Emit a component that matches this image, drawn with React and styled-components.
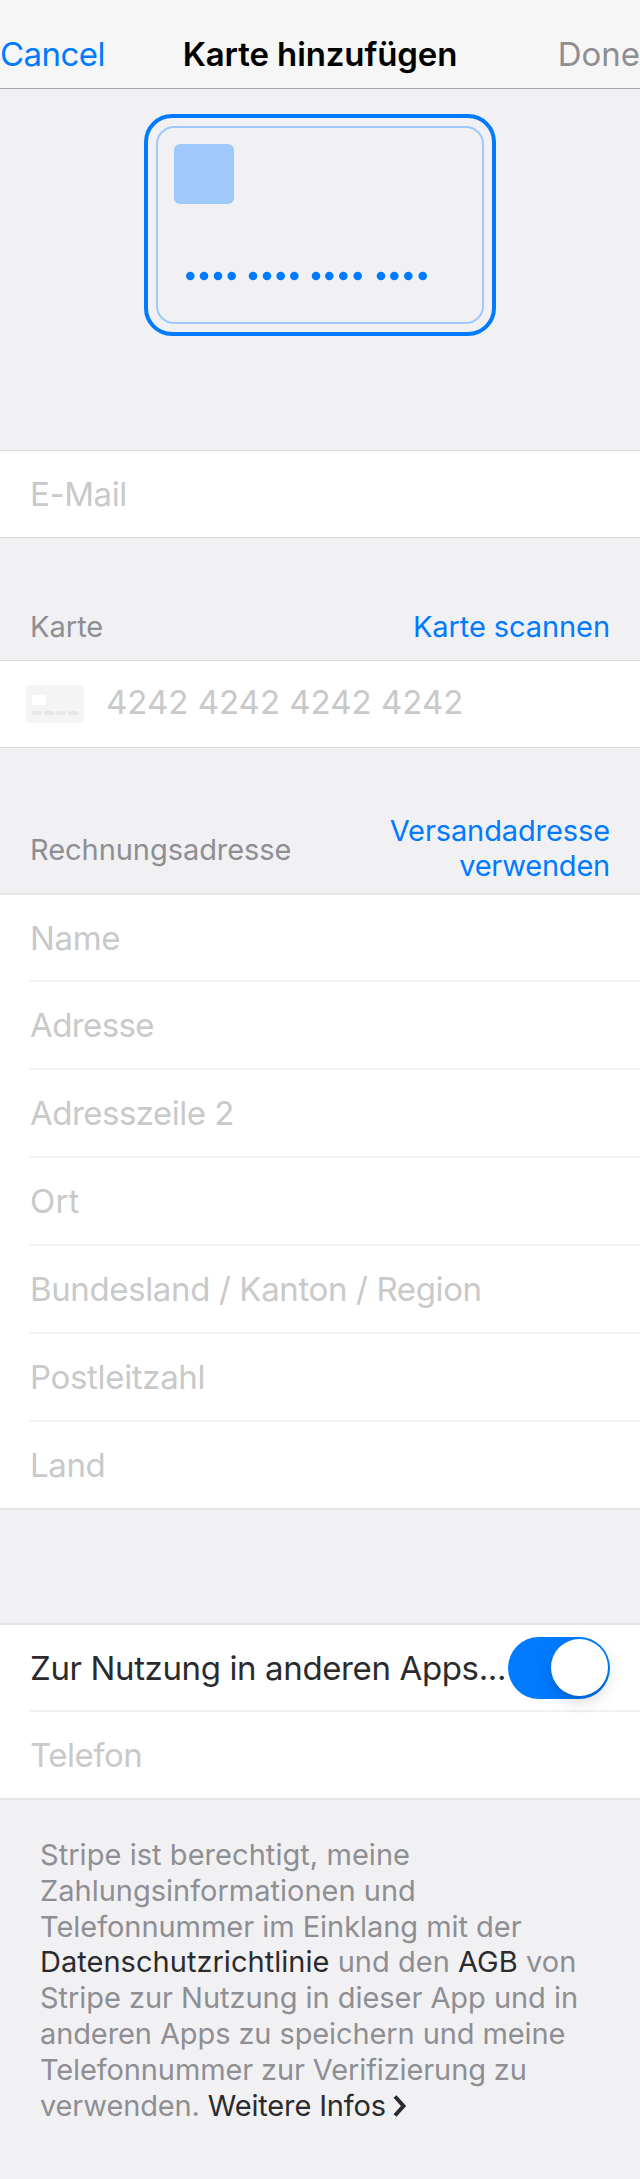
import React from "react";
import styled, { createGlobalStyle } from "styled-components";

const GlobalStyle = createGlobalStyle`
  *, *::before, *::after { box-sizing: border-box; }
  body {
    margin: 0;
    background: #f1f1f4;
    font-family: Inter, "Liberation Sans", sans-serif;
    font-feature-settings: "calt" 0;
  }
`;

const Screen = styled.main`
  width: 640px;
  height: 2179px;
  display: flex;
  flex-direction: column;
  background: #f1f1f4;
  overflow: hidden;
`;

const NavBar = styled.header`
  height: 89px;
  flex: none;
  display: grid;
  grid-template-columns: 120px 1fr 120px;
  padding-top: 34px;
  background: #f6f6f6;
  border-bottom: 1px solid #a7a7aa;
`;

const Label = styled.span`
  white-space: nowrap;
  letter-spacing: ${(p) => p.$track || 0}px;
`;

const NavButton = styled.button`
  border: 0;
  padding: 0;
  height: 40px;
  background: none;
  font: 400 33px/40px Inter, "Liberation Sans", sans-serif;
  text-align: ${(p) => (p.$end ? "right" : "left")};
  color: ${(p) => (p.$muted ? "#8e8e93" : "#007aff")};
`;

const Title = styled.h1`
  margin: 0;
  font-size: 33px;
  line-height: 40px;
  font-weight: 600;
  text-align: center;
  color: #000;
`;

const Preview = styled.div`
  height: 361px;
  flex: none;
  padding-top: 25px;
  display: flex;
  justify-content: center;
  align-items: flex-start;
`;

const Group = styled.section`
  flex: none;
  background: #fff;
  border-style: solid;
  border-color: ${(p) => (p.$soft ? "#e5e5e8" : "#d9d9dc")};
  border-width: ${(p) => (p.$soft ? 2 : 1)}px 0;
`;

const Row = styled.div`
  height: ${(p) => p.$h || 88}px;
  display: flex;
  align-items: center;
  padding: ${(p) => (p.$divided ? 2 : 0)}px 30px 0;
  background: ${(p) =>
    p.$divided
      ? "linear-gradient(#f0f0f0, #f0f0f0) 30px 0 / 610px 2px no-repeat"
      : "none"};
`;

const Placeholder = styled.span`
  font-size: 33px;
  line-height: 40px;
  white-space: nowrap;
  color: #c9c9c9;
  letter-spacing: ${(p) => p.$track || 0}px;
`;

const CardNumber = styled(Placeholder)`
  margin: -4px 0 0 22px;
`;

const SwitchText = styled(Placeholder)`
  color: #2b2b2d;
  flex: 1;
  min-width: 0;
`;

const CardGlyph = styled.svg`
  flex: none;
  display: block;
  margin-left: -4px;
`;

const SectionHeader = styled.div`
  height: ${(p) => p.$h}px;
  flex: none;
  display: flex;
  justify-content: space-between;
  align-items: flex-end;
  padding: 0 30px ${(p) => p.$pb}px;
  font-size: 29px;
  line-height: 35px;
  color: #8e8e93;
`;

const HeaderTitle = styled(Label)`
  margin-bottom: ${(p) => p.$lift || 0}px;
`;

const HeaderAction = styled.a`
  display: flex;
  flex-direction: column;
  align-items: flex-end;
  color: #007aff;
`;

const Spacer = styled.div`
  height: ${(p) => p.$h}px;
  flex: none;
`;

const Switch = styled.div`
  flex: none;
  width: 102px;
  height: 62px;
  border-radius: 31px;
  background: #007aff;
  display: flex;
  justify-content: flex-end;
  align-items: center;
  padding-right: 2.5px;
`;

const Knob = styled.div`
  width: 57px;
  height: 57px;
  border-radius: 50%;
  background: #fff;
  box-shadow: 0 6px 16px rgba(0, 0, 0, 0.15), 0 3px 2px rgba(0, 0, 0, 0.08);
`;

const Legal = styled.p`
  margin: 0;
  padding: 37px 40px 0;
  font-size: 29px;
  line-height: 35.8px;
  color: #8e8e93;
`;

const LegalLine = styled.span`
  display: block;
  white-space: nowrap;
  letter-spacing: ${(p) => p.$track || 0}px;
`;

const Link = styled.a`
  color: #2b2b2d;
`;

const Chevron = styled.svg`
  margin-left: 7px;
  vertical-align: -1px;
`;

const DOTS = [190.3, 204, 218, 231.7, 253, 267, 280.7, 294.3, 316, 329.3, 343.3, 357.7, 381, 394.3, 408.3, 422.7];

const ADDRESS = [
  ["Name", -0.35],
  ["Adresse", -0.6],
  ["Adresszeile 2", -0.52],
  ["Ort", 0.2],
  ["Bundesland / Kanton / Region", -0.37],
  ["Postleitzahl", -0.33],
  ["Land", -0.4],
];

function CardPreview() {
  return (
    <svg width="352" height="222" viewBox="144 114 352 222" fill="none">
      <rect x="146" y="116" width="348" height="218" rx="26" stroke="#007aff" strokeWidth="4" />
      <rect x="157" y="127" width="326" height="196" rx="17" stroke="#9fc9fa" strokeWidth="2" />
      <rect x="174" y="144" width="60" height="60" rx="6" fill="#9fc9fa" />
      {DOTS.map((x) => (
        <circle key={x} cx={x} cy="276" r="4.3" fill="#007aff" />
      ))}
    </svg>
  );
}

export default function App() {
  return (
    <Screen>
      <GlobalStyle />
      <NavBar>
        <NavButton><Label $track={-0.55}>Cancel</Label></NavButton>
        <Title><Label $track={-0.1}>Karte hinzufügen</Label></Title>
        <NavButton $end $muted><Label>Done</Label></NavButton>
      </NavBar>
      <Preview><CardPreview /></Preview>
      <Group>
        <Row $h={86}><Placeholder $track={-0.4}>E-Mail</Placeholder></Row>
      </Group>
      <SectionHeader $h={122} $pb={16}>
        <HeaderTitle>Karte</HeaderTitle>
        <HeaderAction><Label $track={-0.08}>Karte scannen</Label></HeaderAction>
      </SectionHeader>
      <Group>
        <Row $h={86}>
          <CardGlyph width="58" height="38" viewBox="0 0 58 38">
            <rect width="58" height="38" rx="5" fill="#f4f4f4" />
            <rect x="6" y="10" width="14" height="10" rx="1.5" fill="#fff" />
            {[6, 18, 30, 42].map((x) => (
              <rect key={x} x={x} y="26" width="10" height="4" rx="2" fill="#e7e7e7" />
            ))}
          </CardGlyph>
          <CardNumber>4242 4242 4242 4242</CardNumber>
        </Row>
      </Group>
      <SectionHeader $h={145} $pb={10}>
        <HeaderTitle $lift={16} $track={-0.05}>Rechnungsadresse</HeaderTitle>
        <HeaderAction>
          <Label $track={-0.1}>Versandadresse</Label>
          <Label $track={-0.22}>verwenden</Label>
        </HeaderAction>
      </SectionHeader>
      <Group $soft>
        {ADDRESS.map(([text, track], i) => (
          <Row key={text} $h={i === 0 ? 85 : 88} $divided={i > 0}>
            <Placeholder $track={track}>{text}</Placeholder>
          </Row>
        ))}
      </Group>
      <Spacer $h={113} />
      <Group $soft>
        <Row $h={85}>
          <SwitchText $track={-0.37}>Zur Nutzung in anderen Apps...</SwitchText>
          <Switch><Knob /></Switch>
        </Row>
        <Row $divided><Placeholder $track={-0.5}>Telefon</Placeholder></Row>
      </Group>
      <Legal>
        <LegalLine $track={0.05}>Stripe ist berechtigt, meine</LegalLine>
        <LegalLine>Zahlungsinformationen und</LegalLine>
        <LegalLine $track={-0.04}>Telefonnummer im Einklang mit der</LegalLine>
        <LegalLine $track={0.03}><Link>Datenschutzrichtlinie</Link> und den <Link>AGB</Link> von</LegalLine>
        <LegalLine $track={-0.04}>Stripe zur Nutzung in dieser App und in</LegalLine>
        <LegalLine $track={-0.1}>anderen Apps zu speichern und meine</LegalLine>
        <LegalLine $track={-0.12}>Telefonnummer zur Verifizierung zu</LegalLine>
        <LegalLine $track={-0.15}>
          verwenden. <Link>Weitere Infos<Chevron width="14" height="22" viewBox="0 0 14 22" fill="none">
            <path d="M2 1.5 L10.5 11 L2 20.5" stroke="#2b2b2d" strokeWidth="4" />
          </Chevron></Link>
        </LegalLine>
      </Legal>
    </Screen>
  );
}
